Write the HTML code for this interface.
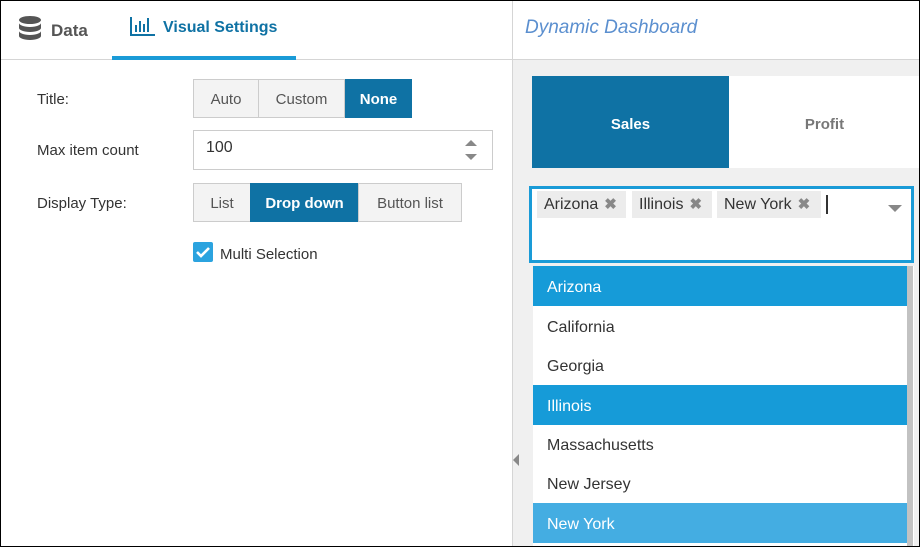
<!DOCTYPE html>
<html><head><style>
*{box-sizing:border-box;margin:0;padding:0}
body{width:920px;height:547px;overflow:hidden;font-family:"Liberation Sans",sans-serif;position:relative;background:#fff}
.a{position:absolute}
.lbl{font-size:15px;color:#333}
.btn{position:absolute;border:1px solid #ccc;background:#f3f3f3;color:#555;font-size:15px;text-align:center}
.act{background:#0f72a4;color:#fff;font-weight:bold;border-color:#0f72a4}
.row{position:absolute;left:533px;width:374px;height:40px;font-size:16px;color:#333;padding-left:14px;line-height:43px}
.sel{background:#169bd8;color:#fff}
.tag{position:absolute;top:191px;height:27px;background:#ececec;font-size:16px;color:#333;line-height:28px;padding-left:7px}
.tag b{color:#888;font-size:15px;margin-left:6px}
</style></head><body>
<div class="a" style="left:0;top:0;width:920px;height:547px;border:1px solid #000;z-index:10;pointer-events:none"></div>
<div class="a" style="left:0;top:59px;width:512px;height:1px;background:#d5d5d5"></div>
<svg class="a" style="left:19px;top:16px" width="24" height="26" viewBox="0 0 24 26"><g fill="#555"><ellipse cx="11" cy="4" rx="11" ry="4"/><path d="M0 7c0 2 5 4 11 4s11-2 11-4v5c0 2-5 4-11 4S0 14 0 12z"/><path d="M0 15c0 2 5 4 11 4s11-2 11-4v5c0 2-5 4-11 4S0 22 0 20z"/></g></svg>
<div class="a" style="left:51px;top:21px;font-size:17px;font-weight:bold;color:#555">Data</div>
<svg class="a" style="left:130px;top:15px" width="26" height="22" viewBox="0 0 26 22"><g fill="#0f72a4"><rect x="0" y="2" width="2" height="19"/><rect x="0" y="19" width="25" height="2"/><rect x="5" y="10" width="2" height="7"/><rect x="9" y="6" width="2" height="11"/><rect x="13" y="9" width="2" height="8"/><rect x="17" y="3" width="2" height="14"/></g></svg>
<div class="a" style="left:163px;top:19px;font-size:16px;font-weight:bold;color:#0f72a4">Visual Settings</div>
<div class="a" style="left:112px;top:56px;width:184px;height:4px;background:#1a9bd7"></div>
<div class="a" style="left:512px;top:0;width:1px;height:547px;background:#d5d5d5"></div>
<div class="a lbl" style="left:37px;top:91px">Title:</div>
<div class="btn" style="left:193px;top:79px;width:66px;height:39px;line-height:39px">Auto</div>
<div class="btn" style="left:258px;top:79px;width:87px;height:39px;line-height:39px">Custom</div>
<div class="btn act" style="left:345px;top:79px;width:67px;height:39px;line-height:39px">None</div>
<div class="a lbl" style="left:37px;top:142px">Max item count</div>
<div class="a" style="left:193px;top:130px;width:300px;height:40px;border:1px solid #ccc"></div>
<div class="a" style="left:206px;top:139px;font-size:16px;color:#333">100</div>
<svg class="a" style="left:464px;top:139px" width="15" height="22"><path d="M1 7L7 1L13 7z" fill="#888"/><path d="M1 15L7 21L13 15z" fill="#888"/></svg>
<div class="a lbl" style="left:37px;top:195px">Display Type:</div>
<div class="btn" style="left:193px;top:183px;width:58px;height:39px;line-height:39px">List</div>
<div class="btn act" style="left:250px;top:183px;width:109px;height:39px;line-height:39px">Drop down</div>
<div class="btn" style="left:358px;top:183px;width:104px;height:39px;line-height:39px">Button list</div>
<div class="a" style="left:193px;top:242px;width:20px;height:20px;background:#2ba3df;border-radius:2px"></div>
<svg class="a" style="left:193px;top:242px" width="20" height="20"><path d="M4 10l4 4l8-8" stroke="#fff" stroke-width="2.6" fill="none"/></svg>
<div class="a lbl" style="left:220px;top:246px">Multi Selection</div>
<div class="a" style="left:525px;top:17px;font-size:19px;font-style:italic;color:#5b8fcf">Dynamic Dashboard</div>
<div class="a" style="left:513px;top:59px;width:407px;height:488px;background:#f0f0f0;border-top:1px solid #d5d5d5"></div>
<div class="a" style="left:532px;top:76px;width:197px;height:92px;background:#0f72a4;color:#fff;font-weight:bold;font-size:15px;text-align:center;line-height:98px">Sales</div>
<div class="a" style="left:729px;top:76px;width:191px;height:92px;background:#fff;color:#777;font-weight:bold;font-size:15px;text-align:center;line-height:98px">Profit</div>
<div class="a" style="left:529px;top:186px;width:385px;height:77px;background:#fff;border:3px solid #1a9bd7"></div>
<div class="tag" style="left:537px;width:89px">Arizona<b>✖</b></div>
<div class="tag" style="left:632px;width:80px">Illinois<b>✖</b></div>
<div class="tag" style="left:717px;width:104px">New York<b>✖</b></div>
<div class="a" style="left:826px;top:195px;width:2px;height:19px;background:#333"></div>
<svg class="a" style="left:888px;top:205px" width="14" height="8"><path d="M0 0h14L7 7z" fill="#888"/></svg>
<div class="a" style="left:533px;top:266px;width:381px;height:281px;background:#fff"></div>
<div class="a" style="left:907px;top:266px;width:6px;height:281px;background:#c2c2c2"></div>
<div class="row sel" style="top:266px">Arizona</div>
<div class="row" style="top:306px">California</div>
<div class="row" style="top:345px">Georgia</div>
<div class="row sel" style="top:385px">Illinois</div>
<div class="row" style="top:424px">Massachusetts</div>
<div class="row" style="top:463px">New Jersey</div>
<div class="row" style="top:503px;background:#44ade2;color:#fff">New York</div>
<svg class="a" style="left:512px;top:454px" width="8" height="12"><path d="M7 0v12L1 6z" fill="#888"/></svg>
</body></html>
